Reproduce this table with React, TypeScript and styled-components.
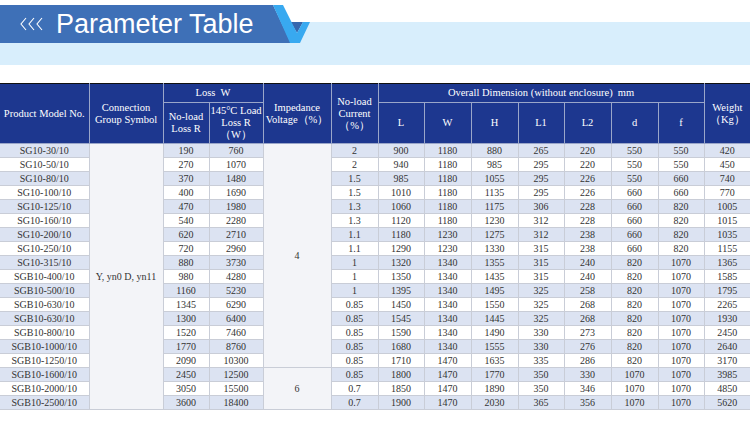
import React from "react";
import styled, { createGlobalStyle } from "styled-components";

const GlobalStyle = createGlobalStyle`
  html, body { margin:0; padding:0; background:#fff; }
  body { font-family:"Liberation Serif", "Times New Roman", serif; }
`;

const serif = `"Liberation Serif", "Times New Roman", serif`;

const Page = styled.div`
  width:750px; height:422px; overflow:hidden; background:#fff;
`;

const Head = styled.header`
  padding-top:5px; height:78px; display:flex; flex-direction:column;
`;

const TopRow = styled.div`
  display:flex; height:38px;
  background:linear-gradient(to bottom, #fff 0 17px, #d8eefc 17px 100%);
`;

const Banner = styled.div`
  position:relative; width:312px; flex:none;
`;

const BannerBody = styled.div`
  height:100%; width:291px; background:#3e70b7;
  clip-path:polygon(0 0, 273px 0, 291px 100%, 0 100%);
  display:flex; align-items:center; gap:12px; padding-left:20px; box-sizing:border-box;
`;

const Title = styled.h1`
  margin:0; font:27px/1 "Liberation Sans", Arial, sans-serif; color:#fff; letter-spacing:0;
  padding-top:1px;
`;

const Chevron = styled.svg`
  position:absolute; left:270px; top:0;
`;

const Spacer = styled.div`
  flex:1;
`;

const LightStrip = styled.div`
  height:22px; background:#d8eefc;
`;

const Table = styled.table`
  width:750px; table-layout:fixed; border-collapse:collapse;
  border-top:1px solid #111; border-bottom:1px solid #111;
  font-family:${serif}; font-size:10px; color:#333;
`;

const Th = styled.th`
  background:#1d378f; color:#fff; font-weight:normal; font-family:${serif}; font-size:10.5px; line-height:12px;
  border:1px solid #9aa6c9; border-top:none; padding:0; text-align:center; vertical-align:middle;
  &:first-child { border-left:none; }
  &:last-child { border-right:none; }
`;

const HeadRow = styled.tr<{ $h: number }>`
  height:${p => p.$h}px;
`;

const Row = styled.tr<{ $alt: boolean }>`
  height:14px; background:${p => (p.$alt ? "#dce3f2" : "#fff")};
`;

const Td = styled.td`
  border:1px solid #c9cdd7; padding:0; text-align:center; line-height:12px; white-space:nowrap;
  font-family:${serif}; font-size:10px; color:#333;
  &:first-child { border-left:none; }
  &:last-child { border-right:none; }
`;

const Merged = styled(Td)`
  background:#f3f4f8; vertical-align:middle;
`;

const widths = [89, 74, 46, 54, 68, 47, 46, 47, 47, 46, 47, 47, 46, 46];

const rows: string[][] = [
  ["SG10-30/10", "190", "760", "2", "900", "1180", "880", "265", "220", "550", "550", "420"],
  ["SG10-50/10", "270", "1070", "2", "940", "1180", "985", "295", "220", "550", "550", "450"],
  ["SG10-80/10", "370", "1480", "1.5", "985", "1180", "1055", "295", "226", "550", "660", "740"],
  ["SG10-100/10", "400", "1690", "1.5", "1010", "1180", "1135", "295", "226", "660", "660", "770"],
  ["SG10-125/10", "470", "1980", "1.3", "1060", "1180", "1175", "306", "228", "660", "820", "1005"],
  ["SG10-160/10", "540", "2280", "1.3", "1120", "1180", "1230", "312", "228", "660", "820", "1015"],
  ["SG10-200/10", "620", "2710", "1.1", "1180", "1230", "1275", "312", "238", "660", "820", "1035"],
  ["SG10-250/10", "720", "2960", "1.1", "1290", "1230", "1330", "315", "238", "660", "820", "1155"],
  ["SG10-315/10", "880", "3730", "1", "1320", "1340", "1355", "315", "240", "820", "1070", "1365"],
  ["SGB10-400/10", "980", "4280", "1", "1350", "1340", "1435", "315", "240", "820", "1070", "1585"],
  ["SGB10-500/10", "1160", "5230", "1", "1395", "1340", "1495", "325", "258", "820", "1070", "1795"],
  ["SGB10-630/10", "1345", "6290", "0.85", "1450", "1340", "1550", "325", "268", "820", "1070", "2265"],
  ["SGB10-630/10", "1300", "6400", "0.85", "1545", "1340", "1445", "325", "268", "820", "1070", "1930"],
  ["SGB10-800/10", "1520", "7460", "0.85", "1590", "1340", "1490", "330", "273", "820", "1070", "2450"],
  ["SGB10-1000/10", "1770", "8760", "0.85", "1680", "1340", "1555", "330", "276", "820", "1070", "2640"],
  ["SGB10-1250/10", "2090", "10300", "0.85", "1710", "1470", "1635", "335", "286", "820", "1070", "3170"],
  ["SGB10-1600/10", "2450", "12500", "0.85", "1800", "1470", "1770", "350", "330", "1070", "1070", "3985"],
  ["SGB10-2000/10", "3050", "15500", "0.7", "1850", "1470", "1890", "350", "346", "1070", "1070", "4850"],
  ["SGB10-2500/10", "3600", "18400", "0.7", "1900", "1470", "2030", "365", "356", "1070", "1070", "5620"],
];

function Arrows() {
  return (
    <svg width="24" height="14" viewBox="0 0 24 14" fill="none" stroke="#fff" strokeWidth="1.1">
      <polyline points="6,1 1,7 6,13" />
      <polyline points="14,1 9,7 14,13" />
      <polyline points="22,1 17,7 22,13" />
    </svg>
  );
}

export default function App() {
  return (
    <Page>
      <GlobalStyle />
      <Head>
        <TopRow>
          <Banner>
            <BannerBody>
              <Arrows />
              <Title>Parameter Table</Title>
            </BannerBody>
            <Chevron width="42" height="38" viewBox="0 0 42 38">
              <polygon points="20.6,17 33,17 27,28" fill="#3566ad" />
              <polygon points="3,0 13,0 27,28 33,17 40,17 30,38 20,38" fill="#38a9f0" />
            </Chevron>
          </Banner>
          <Spacer />
        </TopRow>
        <LightStrip />
      </Head>
      <Table>
        <colgroup>
          {widths.map((w, i) => <col key={i} style={{ width: w }} />)}
        </colgroup>
        <thead>
          <HeadRow $h={19}>
            <Th rowSpan={2}>Product Model No.</Th>
            <Th rowSpan={2}>Connection<br />Group Symbol</Th>
            <Th colSpan={2}>Loss&nbsp;&nbsp;W</Th>
            <Th rowSpan={2}>Impedance<br />Voltage（%）</Th>
            <Th rowSpan={2}>No-load<br />Current<br />（%）</Th>
            <Th colSpan={7}>Overall Dimension (without enclosure)&nbsp;&nbsp;mm</Th>
            <Th rowSpan={2}>Weight<br />（Kg）</Th>
          </HeadRow>
          <HeadRow $h={41}>
            <Th>No-load<br />Loss R</Th>
            <Th>145°C Load<br />Loss R<br />（W）</Th>
            <Th>L</Th>
            <Th>W</Th>
            <Th>H</Th>
            <Th>L1</Th>
            <Th>L2</Th>
            <Th>d</Th>
            <Th>f</Th>
          </HeadRow>
        </thead>
        <tbody>
          {rows.map((r, i) => (
            <Row key={i} $alt={i % 2 === 0}>
              <Td>{r[0]}</Td>
              {i === 0 && <Merged rowSpan={19}>Y, yn0 D, yn11</Merged>}
              <Td>{r[1]}</Td>
              <Td>{r[2]}</Td>
              {i === 0 && <Merged rowSpan={16}>4</Merged>}
              {i === 16 && <Merged rowSpan={3}>6</Merged>}
              {r.slice(3).map((v, j) => <Td key={j}>{v}</Td>)}
            </Row>
          ))}
        </tbody>
      </Table>
    </Page>
  );
}
